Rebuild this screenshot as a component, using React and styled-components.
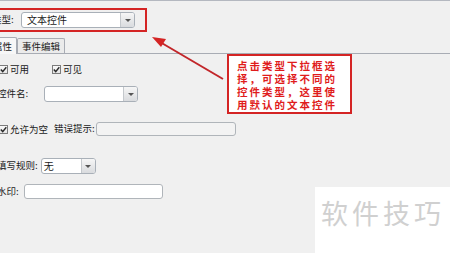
import React from 'react';
import styled, {createGlobalStyle} from 'styled-components';

const GlobalStyle = createGlobalStyle`
    html, body { margin: 0; padding: 0; background: #f0f0f0; }
`;

const FONT = `"Noto Sans CJK SC", "DejaVu Sans", sans-serif`;

const Page = styled.div`
    position: relative;
    width: 450px;
    height: 253px;
    overflow: hidden;
    background: #f0f0f0;
    border-top: 1px solid #b4b8c0;
    box-sizing: border-box;
    font-family: ${FONT};
    font-size: 9.5px;
    color: #1a1a1a;
`;

// the panel is cropped on the left, so the form starts a few px off-screen
const Form = styled.div`
    display: flex;
    flex-direction: column;
    margin-left: -3px;
`;

const TypeRow = styled.div`
    display: flex;
    align-items: center;
    width: 155px;
    height: 24px;
    margin-top: 7px;
    margin-left: -5px;
    border: 2px solid #d42424;
    border-left: none;
    box-sizing: border-box;
`;

const Row = styled.div`
    display: flex;
    align-items: center;
    height: ${p => p.$h || 16}px;
    margin-top: ${p => p.$top || 0}px;
    margin-left: ${p => p.$ml || 0}px;
`;

const Label = styled.span`
    display: inline-block;
    width: ${p => p.$w ? p.$w + 'px' : 'auto'};
    white-space: nowrap;
    line-height: 1;
`;

const Select = styled.div`
    display: flex;
    width: ${p => p.$w}px;
    height: 16px;
    margin-left: ${p => p.$ml || 0}px;
    background: #fff;
    border: 1px solid #a9b0b8;
    border-radius: 3px;
    box-sizing: border-box;
    overflow: hidden;
`;

const SelectText = styled.span`
    flex: 1;
    padding-left: ${p => p.$pl ?? 5}px;
    line-height: 14px;
    font-size: 10px;
`;

const SelectButton = styled.span`
    width: 13px;
    display: flex;
    align-items: center;
    justify-content: center;
    background: linear-gradient(#f6f6f6, #d9dbde);
    border-left: 1px solid #c4c8cc;
    &::after {
        content: "";
        border-left: 3px solid transparent;
        border-right: 3px solid transparent;
        border-top: 3px solid #555;
    }
`;

const Input = styled.div`
    width: ${p => p.$w}px;
    height: ${p => p.$h || 15}px;
    margin-left: ${p => p.$ml || 0}px;
    background: ${p => p.$disabled ? '#f3f3f3' : '#fff'};
    border: 1px solid #b0b5ba;
    border-radius: 3px;
    box-sizing: border-box;
`;

const Tabs = styled.div`
    display: flex;
    align-items: flex-end;
    height: 17px;
    margin-top: 4px;
    margin-left: -9px;
    width: 470px;
    border-bottom: 1px solid #a8acb4;
`;

const Tab = styled.div`
    height: ${p => p.$active ? 17 : 15}px;
    padding: 0 ${p => p.$pad || 4}px;
    display: flex;
    align-items: center;
    background: ${p => p.$active ? '#f7f7f7' : '#ebebeb'};
    border: 1px solid #a8acb4;
    border-bottom: none;
    border-radius: 2px 2px 0 0;
    margin-bottom: ${p => p.$active ? -1 : 0}px;
    box-sizing: border-box;
    font-size: 9.5px;
`;

const Check = styled.span`
    display: inline-flex;
    align-items: center;
    justify-content: center;
    width: 9px;
    height: 9px;
    margin-right: 2px;
    background: linear-gradient(#fafafa, #e4e4e4);
    border: 1px solid #7c7c7c;
    box-sizing: border-box;
`;

const CheckItem = styled.span`
    display: inline-flex;
    align-items: center;
    margin-right: ${p => p.$mr || 0}px;
`;

const Callout = styled.div`
    position: absolute;
    left: 227px;
    top: 53px;
    width: 125px;
    height: 60px;
    box-sizing: border-box;
    padding: 3px 0 0 8px;
    background: #fff;
    border: 2px solid #d42424;
    color: #e01c1c;
    font-weight: 700;
    font-size: 10.5px;
    line-height: 13px;
    letter-spacing: 2px;
`;

const Arrow = styled.svg`
    position: absolute;
    left: 0;
    top: 0;
    pointer-events: none;
`;

const Watermark = styled.div`
    position: absolute;
    left: 315px;
    top: 186px;
    width: 140px;
    height: 70px;
    background: #fff;
    color: #d0d0d0;
    font-size: 27px;
    letter-spacing: 4px;
    padding: 10px 0 0 6px;
    box-sizing: border-box;
    line-height: 1.2;
`;

function CheckMark() {
    return (
        <svg width="7" height="7" viewBox="0 0 7 7">
            <path d="M0.8 3.6 L2.7 5.6 L6.3 1.2" fill="none" stroke="#2a2a2a" strokeWidth="1.4" />
        </svg>
    );
}

function Dropdown({w, ml, value, pl}) {
    return (
        <Select $w={w} $ml={ml}>
            <SelectText $pl={pl}>{value}</SelectText>
            <SelectButton />
        </Select>
    );
}

export default function App() {
    return (
        <Page>
            <GlobalStyle />
            <Form>
                <TypeRow>
                    <Label $w={29}>类型:</Label>
                    <Dropdown w={114} value="文本控件" />
                </TypeRow>
                <Tabs>
                    <Tab $active $pad={4}>属性</Tab>
                    <Tab>事件编辑</Tab>
                </Tabs>
                <Row $top={8} $h={14} $ml={2}>
                    <CheckItem $mr={23}><Check><CheckMark /></Check>可用</CheckItem>
                    <CheckItem><Check><CheckMark /></Check>可见</CheckItem>
                </Row>
                <Row $top={10}>
                    <Label $w={47}>控件名:</Label>
                    <Dropdown w={94} value="" />
                </Row>
                <Row $top={20} $h={14} $ml={2}>
                    <CheckItem $mr={6}><Check><CheckMark /></Check>允许为空</CheckItem>
                    <Label>错误提示:</Label>
                    <Input $w={140} $h={14} $ml={1} $disabled />
                </Row>
                <Row $top={22}>
                    <Label>填写规则:</Label>
                    <Dropdown w={55} ml={3} value="无" pl={2} />
                </Row>
                <Row $top={10} $h={15}>
                    <Label>水印:</Label>
                    <Input $w={139} $ml={5} />
                </Row>
            </Form>

            <Arrow width="450" height="253">
                <line x1="223" y1="78" x2="160" y2="41" stroke="#c2262a" strokeWidth="2" />
                <polygon points="152,36 166,38 161,46" fill="#d42424" />
            </Arrow>

            <Callout>
                点击类型下拉框选<br />
                择，可选择不同的<br />
                控件类型，这里使<br />
                用默认的文本控件
            </Callout>

            <Watermark>软件技巧</Watermark>
        </Page>
    );
}
